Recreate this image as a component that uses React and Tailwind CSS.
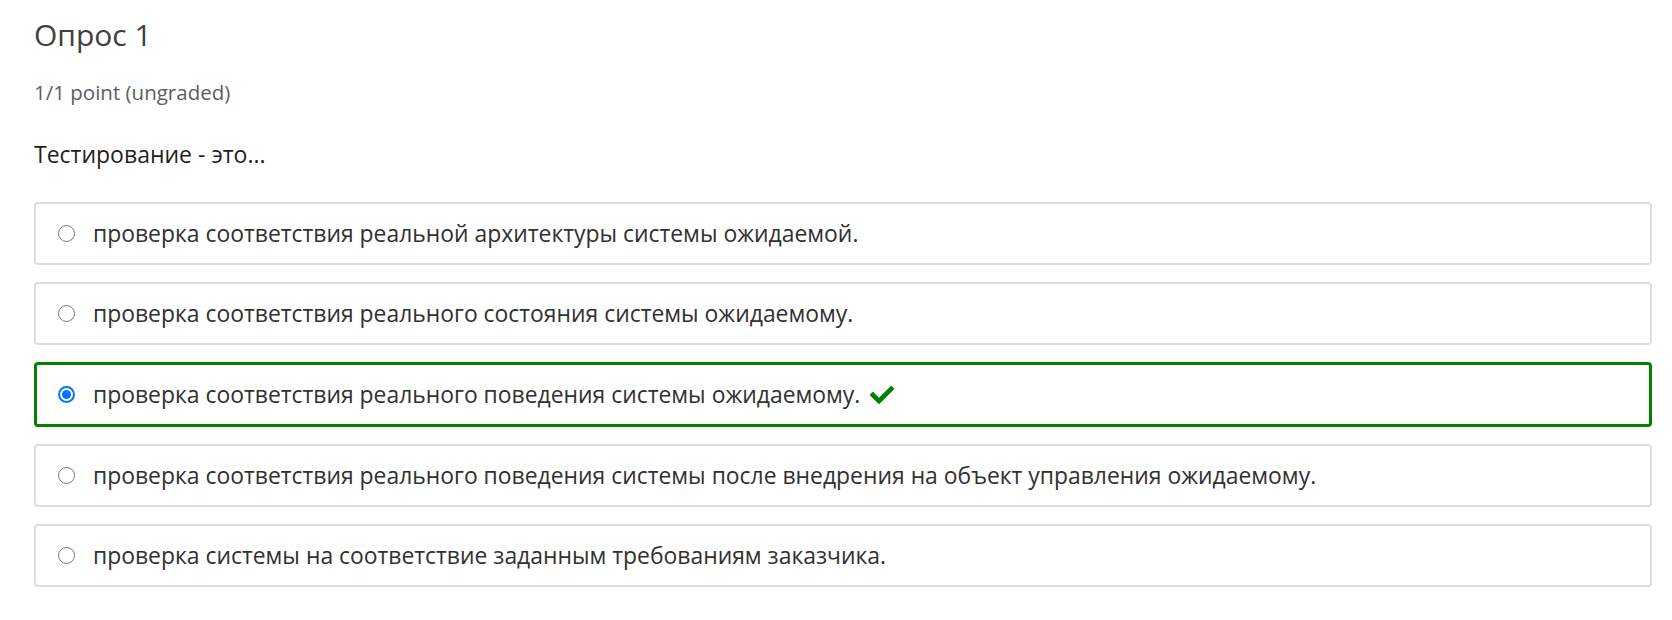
const options = [
  { text: 'проверка соответствия реальной архитектуры системы ожидаемой.' },
  { text: 'проверка соответствия реального состояния системы ожидаемому.' },
  { text: 'проверка соответствия реального поведения системы ожидаемому.', selected: true },
  { text: 'проверка соответствия реального поведения системы после внедрения на объект управления ожидаемому.' },
  { text: 'проверка системы на соответствие заданным требованиям заказчика.' },
];

function Radio({ checked }) {
  if (checked) {
    return (
      <span className="flex h-[17px] w-[17px] shrink-0 items-center justify-center rounded-full border-2 border-[#0075ff] bg-white">
        <span className="h-[9px] w-[9px] rounded-full bg-[#0075ff]" />
      </span>
    );
  }
  return <span className="h-[17px] w-[17px] shrink-0 rounded-full border-[1.5px] border-[#767676] bg-white" />;
}

function Check() {
  return (
    <svg viewBox="0 72 512 368" className="ml-[10px] h-[18px] w-[24px] shrink-0" fill="#008100">
      <path d="M173.898 439.404l-166.4-166.4c-9.997-9.997-9.997-26.206 0-36.204l36.203-36.204c9.997-9.998 26.207-9.998 36.204 0L192 312.69 432.095 72.596c9.997-9.997 26.207-9.997 36.204 0l36.203 36.204c9.997 9.997 9.997 26.206 0 36.204l-294.4 294.401c-9.998 9.997-26.207 9.997-36.204-.001z" />
    </svg>
  );
}

export default function App() {
  return (
    <div className="min-h-[620px] bg-white pl-[34px] pr-[20px] pt-[20px] font-['Open_Sans',sans-serif]">
      <h3 className="text-[30px] leading-[30px] text-[#414141]">Опрос 1</h3>
      <div className="mt-[32px] text-[20.5px] leading-[20px] text-[#5e5e5e]">1/1 point (ungraded)</div>
      <p className="mt-[41px] text-[23px] leading-[23px] text-[#1f1f1f]">Тестирование - это...</p>

      <div className="mt-[36px] flex flex-col gap-[17px]">
        {options.map((o, i) => (
          <label
            key={i}
            className={
              o.selected
                ? 'flex h-[65px] items-center rounded-[4px] border-[3px] border-[#008100] bg-white pl-[21px]'
                : 'flex h-[63px] items-center rounded-[4px] border-2 border-[#dedede] bg-white pl-[22px]'
            }
          >
            <Radio checked={o.selected} />
            <span className="ml-[18px] text-[22.9px] leading-[30px] text-[#313131]">{o.text}</span>
            {o.selected && <Check />}
          </label>
        ))}
      </div>
    </div>
  );
}
